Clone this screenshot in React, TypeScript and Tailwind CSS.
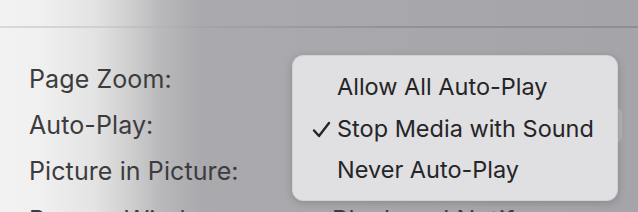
import React from "react";

const font = { fontFamily: "Inter, 'Noto Sans', sans-serif" };

export default function App() {
  return (
    <div
      className="relative w-[638px] h-[212px] overflow-hidden bg-[linear-gradient(to_right,#f2f2f2_0px,#f0f0f0_40px,#e3e3e3_95px,#cfcfd0_130px,#b9b9bb_160px,#aaa9ad_200px,#a8a7ac_400px,#a5a4a9_100%)]"
      style={font}
    >
      <div className="h-[26px]" />
      <div className="h-[2px] bg-[linear-gradient(to_right,#d9d9d9_0px,#d0d0d0_100px,#a5a5a8_200px,#929196_400px,#8f8e93_100%)]" />
      <div className="flex flex-col pl-[29px] pt-[36px] gap-[16px] text-[25px] leading-[30px] text-[#3c3c3e] tracking-[0.1px]">
        <div>Page Zoom:</div>
        <div>Auto-Play:</div>
        <div>Picture in Picture:</div>
        <div className="flex mt-[3px]">
          <span className="w-[303px] shrink-0">Pop-up Windows:</span>
          <span>Block and Notify</span>
        </div>
      </div>
      <div className="absolute left-[600px] top-[107px] w-[22px] h-[36px] rounded-[7px] bg-[#b4b3b7]" />
      <div className="absolute left-[292px] top-[55px] w-[326px] h-[146px] rounded-[11px] bg-[#e0dfe2] shadow-[0_2px_8px_rgba(0,0,0,0.18)] border border-[#d2d1d5] flex flex-col pt-[17px] gap-[13.5px] text-[23.5px] leading-[28px] text-[#252527]">
        <div className="flex items-center h-[28px] pl-[44px]">Allow All Auto-Play</div>
        <div className="flex items-center h-[28px] pl-[19px]">
          <svg width="19" height="17" viewBox="0 0 19 17" className="mr-[6px] mt-[2px]">
            <path d="M2 9.5 L7 15 L17 2" fill="none" stroke="#252527" strokeWidth="2.4" strokeLinecap="round" strokeLinejoin="round" />
          </svg>
          <span>Stop Media with Sound</span>
        </div>
        <div className="flex items-center h-[28px] pl-[44px]">Never Auto-Play</div>
      </div>
    </div>
  );
}
